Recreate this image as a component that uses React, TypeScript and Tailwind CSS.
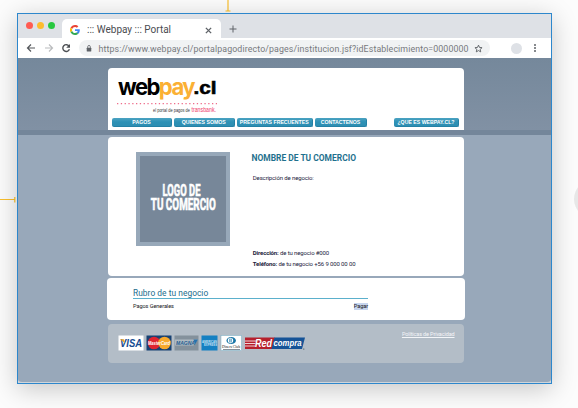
import React from "react";

function BrandG() {
  return (
    <svg viewBox="0 0 48 48" className="h-[10px] w-[10px] shrink-0">
      <path fill="#EA4335" d="M24 9.500c3.500 0 6.700 1.200 9.200 3.600l6.900-6.900C35.900 2.400 30.500 0 24 0 14.600 0 6.500 5.400 2.600 13.200l8 6.200C12.400 13.700 17.700 9.500 24 9.500z" />
      <path fill="#4285F4" d="M47 24.600c0-1.600-.2-3.100-.4-4.600H24v9h12.900c-.6 3-2.300 5.500-4.800 7.200l7.700 6C44.400 38 47 31.800 47 24.600z" />
      <path fill="#FBBC05" d="M10.500 28.600A14.500 14.500 0 0 1 10.500 19.400l-8-6.200a24 24 0 0 0 0 21.600z" />
      <path fill="#34A853" d="M24 48c6.500 0 11.900-2.100 15.900-5.800l-7.700-6c-2.200 1.500-4.900 2.300-8.200 2.300-6.300 0-11.600-4.200-13.500-9.900l-8 6.200C6.500 42.600 14.600 48 24 48z" />
    </svg>
  );
}

function TabBar() {
  return (
    <div className="flex h-6 items-end bg-[#dee1e6]">
      <div className="flex h-6 w-[38px] items-center gap-[4px] pb-px pl-[7.500px]">
        <span className="h-[7px] w-[7px] shrink-0 rounded-full bg-[#ff5b52]" />
        <span className="h-[7px] w-[7px] shrink-0 rounded-full bg-[#fdbc2e]" />
        <span className="h-[7px] w-[7px] shrink-0 rounded-full bg-[#28c840]" />
      </div>
      <div className="ml-[6px] flex h-[19px] w-[159px] items-center rounded-t-[5px] bg-white pl-[8px]">
        <div className="pt-[3px]"><BrandG /></div>
        <span className="ml-[7px] w-[100px] whitespace-nowrap pt-[2px] text-[10px] leading-[14px] text-[#4a4c50]">::: Webpay ::: Portal</span>
        <svg viewBox="0 0 8 8" className="ml-[17.500px] mt-[3px] h-[7px] w-[7px]">
          <path d="M1 1l6 6M7 1L1 7" stroke="#5f6368" strokeWidth="1.600" />
        </svg>
      </div>
      <svg viewBox="0 0 8 8" className="mb-[5.500px] ml-[8px] h-[8px] w-[8px]">
        <path d="M4 .5v7M.5 4h7" stroke="#5f6368" strokeWidth="1" />
      </svg>
    </div>
  );
}

function Toolbar() {
  return (
    <div className="flex h-5 items-center bg-white">
      <svg viewBox="0 0 48 12" className="ml-[8px] h-[12px] w-[48px] shrink-0" fill="none" strokeWidth="1.200">
        <path d="M9 6H1.500M5 2.500L1.500 6 5 9.500" stroke="#54575b" />
        <path d="M19 6h7.500M23 2.500L26.500 6 23 9.500" stroke="#babcbe" />
        <path d="M43 4.100A3.400 3.400 0 1 0 43.400 7.300" stroke="#4d5054" strokeWidth="1.400" />
        <path d="M44 2v3.800h-3.800z" fill="#4d5054" />
      </svg>
      <div className="ml-[5px] flex h-4 w-[411px] items-center rounded-full bg-[#f1f3f4] pl-[7px]">
        <svg viewBox="0 0 6 8" className="h-[7px] w-[6px] shrink-0">
          <path d="M1.500 3.500V2a1.500 1.500 0 0 1 3 0v1.500" fill="none" stroke="#5f6368" strokeWidth=".9" />
          <rect x=".4" y="3" width="5.200" height="4.500" rx=".6" fill="#5f6368" />
        </svg>
        <span className="ml-[6.500px] w-[371px] whitespace-nowrap pt-px text-[8.800px] leading-[12px] tracking-[0.120px] text-[#77797d]">
          https://www.webpay.cl/portalpagodirecto/pages/institucion.jsf?idEstablecimiento=0000000
        </span>
        <svg viewBox="0 0 24 24" className="ml-[4px] h-[9px] w-[9px] shrink-0" fill="none" stroke="#5f6368" strokeWidth="2.500">
          <path d="M12 3l2.700 6.200 6.800.6-5.100 4.500 1.500 6.700-5.900-3.500L6.100 21l1.500-6.700-5.100-4.500 6.800-.6z" />
        </svg>
      </div>
      <span className="ml-[21px] h-[11px] w-[11px] rounded-full bg-[#dee1e6]" />
      <div className="ml-[12px] flex flex-col gap-[1.500px]">
        <i className="h-[1.600px] w-[1.600px] rounded-full bg-[#5f6368]" />
        <i className="h-[1.600px] w-[1.600px] rounded-full bg-[#5f6368]" />
        <i className="h-[1.600px] w-[1.600px] rounded-full bg-[#5f6368]" />
      </div>
    </div>
  );
}

function WebpayLogo() {
  return (
    <svg viewBox="0 0 104 40" className="h-[40px] w-[104px] overflow-visible" fontFamily="Inter, sans-serif">
      <text x="2" y="18" fontSize="22.500" fontWeight="700" letterSpacing="-1.600" textLength="76" lengthAdjust="spacingAndGlyphs">
        <tspan fill="#000">web</tspan><tspan fill="#fbb034">pay</tspan>
      </text>
      <text x="77.500" y="17" fontSize="18" fontWeight="700" textLength="23" lengthAdjust="spacingAndGlyphs" fill="#000" stroke="#000" strokeWidth=".6" fontFamily="'Liberation Sans', sans-serif">.cl</text>
      <path d="M1 26.700h100" stroke="#ee6d8b" strokeWidth="1.200" strokeDasharray="1.300 2.500" />
      <text x="37" y="34.500" fontSize="5" textLength="37" lengthAdjust="spacingAndGlyphs" fill="#333" fontFamily="'Liberation Sans', sans-serif">el portal de pagos de</text>
      <text x="75.500" y="34.500" fontSize="7" textLength="24.500" lengthAdjust="spacingAndGlyphs" fill="#ee3d6b" fontFamily="'Liberation Sans', sans-serif">transbank.</text>
    </svg>
  );
}

function NavButton({ className, children }: { className: string; children: React.ReactNode }) {
  return (
    <div className={"flex h-[9px] shrink-0 items-center justify-center whitespace-nowrap rounded-[2px] border-b border-r border-[#2481a5] bg-gradient-to-b from-[#4ba3c2] via-[#2d91b5] to-[#2e8eb2] font-['Liberation_Sans',sans-serif] text-[5.200px] font-bold leading-[8px] text-white " + className}>
      {children}
    </div>
  );
}

function Header() {
  return (
    <header className="h-[77px] border-b-[5px] border-[#74869a] bg-gradient-to-b from-[#75889b] to-[#8191a4] pt-[10px]">
      <div className="ml-[90px] flex h-[62px] w-[356px] flex-col rounded-t-[4px] bg-white">
        <div className="h-[50px] pl-[8px] pt-[9px]"><WebpayLogo /></div>
        <nav className="flex pl-[4px]">
          <NavButton className="w-[60px]">PAGOS</NavButton>
          <NavButton className="ml-[2px] w-[60.500px]">QUIENES SOMOS</NavButton>
          <NavButton className="ml-[2.500px] w-[75.500px]">PREGUNTAS FRECUENTES</NavButton>
          <NavButton className="ml-[2.500px] w-[52px]">CONTACTENOS</NavButton>
          <NavButton className="ml-[27px] w-[65px]">¿QUE ES WEBPAY.CL?</NavButton>
        </nav>
      </div>
    </header>
  );
}

function StoreLogo() {
  return (
    <div className="h-[94px] w-[94px] shrink-0 border-[4px] border-[#97a8b9] bg-[#778799]">
      <svg viewBox="0 0 86 86" className="h-full w-full" fill="#fff" stroke="#fff" strokeWidth=".6" fontFamily="Roboto, sans-serif" fontWeight="700" fontSize="16">
        <text x="22.500" y="39.500" textLength="38" lengthAdjust="spacingAndGlyphs">LOGO DE</text>
        <text x="10.800" y="53.500" textLength="65" lengthAdjust="spacingAndGlyphs">TU COMERCIO</text>
      </svg>
    </div>
  );
}

function StoreCard() {
  return (
    <section className="flex h-[139px] w-[356px] rounded-[4px] bg-white pl-[27.500px] pt-[15px]">
      <StoreLogo />
      <div className="ml-[22px] whitespace-nowrap text-[6px] leading-[8px] tracking-[-0.130px] text-[#1b1b3c]">
        <h1 className="mt-[1px] text-[8.450px] font-bold leading-[10px] tracking-normal text-[#1f718e]">NOMBRE DE TU COMERCIO</h1>
        <p className="ml-[1.300px] mt-[11px]">Descripción de negocio:</p>
        <p className="ml-[1.300px] mt-[67px]"><b>Dirección:</b> de tu negocio #000</p>
        <p className="ml-[1.300px] mt-[3px]"><b>Teléfono:</b> de tu negocio +56 9 000 00 00</p>
      </div>
    </section>
  );
}

function PaymentCard() {
  return (
    <section className="-mx-[1px] mt-[2px] h-[42px] w-[358px] rounded-[4px] bg-white pl-[26px] pt-[9px]">
      <div className="w-[235px]">
        <h2 className="h-[12px] border-b border-[#5bb0cc] text-[8.400px] leading-[12px] tracking-[0.040px] text-[#1c6d8d]">Rubro de tu negocio</h2>
        <div className="mt-[4px] flex justify-between text-[5.600px] leading-[7px] tracking-[-0.080px] text-[#17171c]">
          <span>Pagos Generales</span>
          <span className="bg-[#c6d5ee]">Pagar</span>
        </div>
      </div>
    </section>
  );
}

function CardLogos() {
  return (
    <svg viewBox="0 0 190 18" className="h-[18px] w-[190px]" fontFamily="'Liberation Sans', sans-serif" fontWeight="700" fontStyle="italic">
      <rect x=".5" y="1.500" width="25" height="15" fill="#fff" />
      <text x="2" y="12.500" fontSize="10" textLength="22" lengthAdjust="spacingAndGlyphs" fill="#164b91">VISA</text>
      <path d="M2 5.300h4l1 4z" fill="#e8a62c" />
      <rect x="28.500" y="1.500" width="25" height="15" fill="#174173" />
      <circle cx="36" cy="9" r="6.300" fill="#df2430" />
      <circle cx="46.500" cy="9" r="6.300" fill="#f8a92d" />
      <text x="30" y="11" fontSize="5.500" textLength="22" lengthAdjust="spacingAndGlyphs" fill="#fff">MasterCard</text>
      <rect x="56.500" y="1.500" width="24" height="15" fill="#84919c" />
      <path d="M57 5.500h23l-4.500 6H57z" fill="#aeb9c1" />
      <path d="M75.500 5.500h4.500l-3 5z" fill="#2872ad" />
      <text x="58" y="10.500" fontSize="5" textLength="19" lengthAdjust="spacingAndGlyphs" fill="#265e91">MAGNA</text>
      <rect x="83.500" y="1.500" width="16" height="15" fill="#1580c2" />
      <g fill="#c9e2f4" fontStyle="normal" fontSize="3">
        <text x="84" y="8.800" textLength="15" lengthAdjust="spacingAndGlyphs">AMERICAN</text>
        <text x="86" y="12" textLength="13" lengthAdjust="spacingAndGlyphs">EXPRESS</text>
      </g>
      <rect x="103" y="1.500" width="20.500" height="15" fill="#fff" stroke="#73abc4" strokeWidth=".5" />
      <ellipse cx="113.200" cy="6.500" rx="4.700" ry="3.600" fill="#1976a7" />
      <circle cx="112.500" cy="6.500" r="2.700" fill="#fff" />
      <path d="M111.800 4.500v4M113.200 4.500v4" stroke="#1976a7" strokeWidth=".8" />
      <text x="104" y="14" fontSize="4.500" fontStyle="normal" fontWeight="400" fontFamily="'Liberation Serif', serif" textLength="18" lengthAdjust="spacingAndGlyphs" fill="#111">Diners Club</text>
      <path d="M105 15.500h17" stroke="#526170" strokeWidth=".7" />
      <path d="M127 3.500h30l-3 11.500h-27z" fill="#b6202d" />
      <path d="M156.500 3.500H187l-3 11.500h-30.500z" fill="#155397" />
      <path d="M127 7h11M127 9.500h10.500M127 12h10" stroke="#fff" strokeWidth=".8" />
      <text x="137" y="12.500" fontSize="11" textLength="17" lengthAdjust="spacingAndGlyphs" fill="#fff">Red</text>
      <text x="155.500" y="12" fontSize="9" textLength="28" lengthAdjust="spacingAndGlyphs" fill="#fff">compra</text>
      <circle cx="185.800" cy="15" r=".6" fill="#344" />
    </svg>
  );
}

function Footer() {
  return (
    <footer className="mt-[4px] flex h-[39px] w-[356px] justify-between rounded-[4px] bg-[#b3bdc7] pl-[10px] pr-[9.500px]">
      <div className="pt-[10px]"><CardLogos /></div>
      <span className="mt-[6px] h-[8px] whitespace-nowrap text-[5.500px] leading-[8px] tracking-[-0.130px] text-[#f3f5f8] underline">Políticas de Privacidad</span>
    </footer>
  );
}

export default function App() {
  return (
    <div className="relative h-[408px] w-[578px] overflow-hidden bg-[#fcfcfc] font-['Roboto',sans-serif]">
      <svg className="absolute inset-0 h-full w-full" viewBox="0 0 578 408">
        <path d="M228 0v11M225.500 11h5M0 199.500h15M14.800 197v5.500" stroke="#fbc02d" strokeWidth="1.200" />
        <circle cx="593" cy="199" r="19" fill="#e8e8e8" />
      </svg>
      <main className="relative ml-[17px] mt-[13px] h-[371px] w-[535px] border border-[#2d87cc] bg-[#98a8ba] shadow-[0_5px_24px_rgba(0,0,0,0.220)]">
        <TabBar />
        <Toolbar />
        <Header />
        <div className="ml-[90px] w-[356px] pt-[2px]">
          <StoreCard />
          <PaymentCard />
          <Footer />
        </div>
        <svg className="absolute bottom-0 left-0 h-[4px] w-[533px]" viewBox="0 0 533 4">
          <path d="M0 0Q0 3 4 3H529Q533 3 533 0V4H0z" fill="#d0d5da" />
        </svg>
      </main>
    </div>
  );
}
